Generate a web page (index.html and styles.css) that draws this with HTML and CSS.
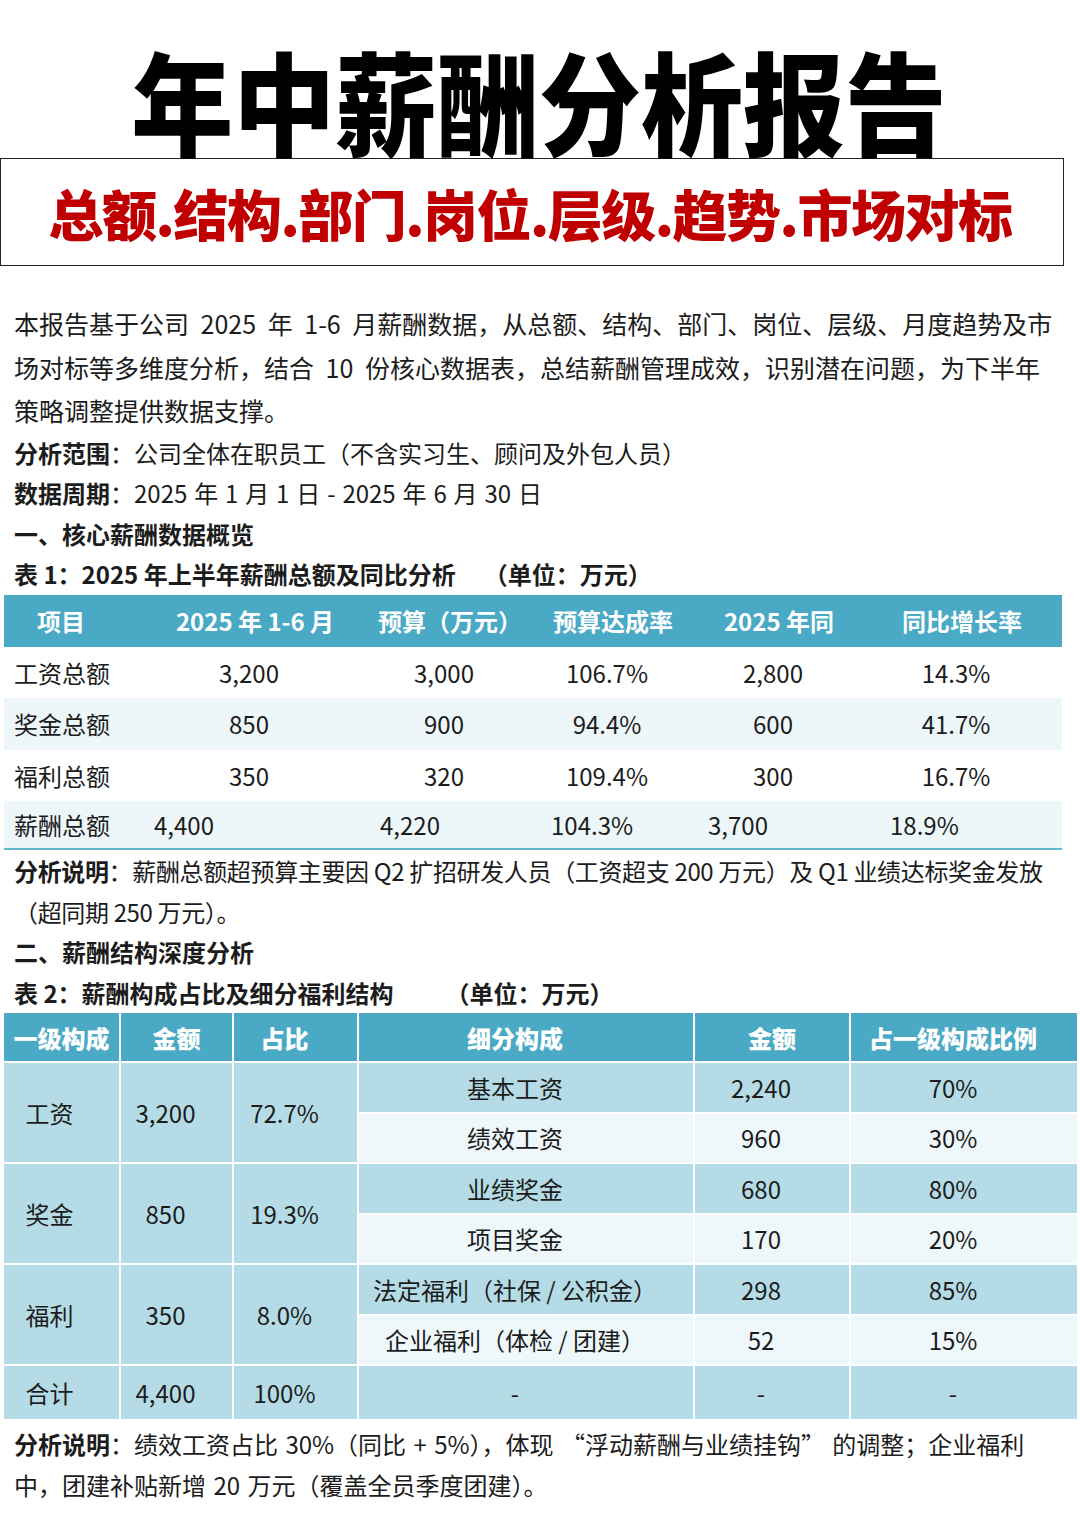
FILE: index.html
```html
<!DOCTYPE html>
<html lang="zh-CN">
<head>
<meta charset="utf-8">
<title>年中薪酬分析报告</title>
<link rel="stylesheet" href="styles.css">
</head>
<body>
<div class="page">
  <h1 class="title"><span class="title-text">年中薪酬分析报告</span></h1>
  <div class="subbox"><div class="subtitle">总额.结构.部门.岗位.层级.趋势.市场对标</div></div>

  <div class="content">
    <p class="intro">本报告基于公司 2025 年 1-6 月薪酬数据，从总额、结构、部门、岗位、层级、月度趋势及市场对标等多维度分析，结合 10 份核心数据表，总结薪酬管理成效，识别潜在问题，为下半年策略调整提供数据支撑。</p>
    <p class="line"><b>分析范围</b>：公司全体在职员工（不含实习生、顾问及外包人员）</p>
    <p class="line spaced"><b>数据周期</b>：2025 年 1 月 1 日 - 2025 年 6 月 30 日</p>
    <h2 class="section">一、核心薪酬数据概览</h2>
    <h3 class="caption">表 1：2025 年上半年薪酬总额及同比分析<span class="unit">（单位：万元）</span></h3>
  </div>

  <table class="t1">
    <colgroup>
      <col class="c1"><col class="c2"><col class="c3"><col class="c4"><col class="c5"><col class="c6">
    </colgroup>
    <thead>
      <tr><th class="name">项目</th><th>2025 年 1-6 月</th><th>预算（万元）</th><th>预算达成率</th><th>2025 年同</th><th>同比增长率</th></tr>
    </thead>
    <tbody>
      <tr><td class="name">工资总额</td><td>3,200</td><td>3,000</td><td>106.7%</td><td>2,800</td><td>14.3%</td></tr>
      <tr class="alt"><td class="name">奖金总额</td><td>850</td><td>900</td><td>94.4%</td><td>600</td><td>41.7%</td></tr>
      <tr><td class="name">福利总额</td><td>350</td><td>320</td><td>109.4%</td><td>300</td><td>16.7%</td></tr>
      <tr class="alt last"><td class="name">薪酬总额</td><td>4,400</td><td>4,220</td><td>104.3%</td><td>3,700</td><td>18.9%</td></tr>
    </tbody>
  </table>

  <div class="content">
    <p class="note tight"><b>分析说明</b>：薪酬总额超预算主要因 Q2 扩招研发人员（工资超支 200 万元）及 Q1 业绩达标奖金发放（超同期 250 万元）。</p>
    <h2 class="section">二、薪酬结构深度分析</h2>
    <h3 class="caption">表 2：薪酬构成占比及细分福利结构<span class="unit2">（单位：万元）</span></h3>
  </div>

  <table class="t2">
    <colgroup>
      <col class="d1"><col class="d2"><col class="d3"><col class="d4"><col class="d5"><col class="d6">
    </colgroup>
    <thead>
      <tr><th>一级构成</th><th>金额</th><th class="sh">占比</th><th class="sh">细分构成</th><th>金额</th><th class="sh">占一级构成比例</th></tr>
    </thead>
    <tbody>
      <tr class="dark"><td rowspan="2" class="m first">工资</td><td rowspan="2" class="m">3,200</td><td rowspan="2" class="m">72.7%</td><td>基本工资</td><td>2,240</td><td>70%</td></tr>
      <tr class="light"><td>绩效工资</td><td>960</td><td>30%</td></tr>
      <tr class="dark"><td rowspan="2" class="m first">奖金</td><td rowspan="2" class="m">850</td><td rowspan="2" class="m">19.3%</td><td>业绩奖金</td><td>680</td><td>80%</td></tr>
      <tr class="light"><td>项目奖金</td><td>170</td><td>20%</td></tr>
      <tr class="dark"><td rowspan="2" class="m first">福利</td><td rowspan="2" class="m">350</td><td rowspan="2" class="m">8.0%</td><td>法定福利（社保 / 公积金）</td><td>298</td><td>85%</td></tr>
      <tr class="light"><td>企业福利（体检 / 团建）</td><td>52</td><td>15%</td></tr>
      <tr class="dark total"><td class="m first">合计</td><td class="m">4,400</td><td class="m">100%</td><td>-</td><td>-</td><td>-</td></tr>
    </tbody>
  </table>

  <div class="content">
    <p class="note wide"><b>分析说明</b>：绩效工资占比 30%（同比 + 5%），体现 “浮动薪酬与业绩挂钩” 的调整；企业福利中，团建补贴新增 20 万元（覆盖全员季度团建）。</p>
  </div>
</div>
</body>
</html>
```

FILE: styles.css
```css
* { box-sizing: border-box; }
html, body { margin: 0; padding: 0; background: #ffffff; }
body {
  font-family: "Noto Sans CJK SC", "Noto Sans", sans-serif;
  color: #1c1c1c;
}
.page { width: 1080px; }

.title {
  margin: 0;
  padding-top: 44px;
  height: 158px;
  font-size: 112px;
  line-height: 110px;
  font-weight: 900;
  color: #000;
  text-align: center;
  white-space: nowrap;
}
.title-text {
  display: inline-block;
  transform: scaleX(0.91);
  margin-left: -2px;
}

.subbox {
  width: 1064px;
  height: 108px;
  border: 1.5px solid #222;
  display: flex;
  align-items: center;
  justify-content: center;
}
.subtitle {
  color: #c00000;
  font-size: 55px;
  font-weight: 900;
  letter-spacing: -1.5px;
  line-height: 1;
  white-space: nowrap;
  margin-left: -4px;
}

.content { padding: 0 20px 0 14px; }
.intro {
  margin: 36px 0 0 0;
  font-size: 25px;
  line-height: 43.5px;
  word-spacing: 6px;
}
.line, .note {
  margin: 0;
  font-size: 24px;
  line-height: 40.5px;
}
.line.spaced { word-spacing: 1.5px; }
.note { line-height: 41px; }
.note.tight { letter-spacing: -0.35px; }
.note.wide { word-spacing: 2px; }
.line b, .note b { font-weight: 700; }
.section, .caption {
  margin: 0;
  font-size: 24px;
  line-height: 40.5px;
  font-weight: 700;
}
.unit { margin-left: 28px; }
.unit2 { margin-left: 52px; }

/* Table 1 */
.t1 {
  margin-left: 4px;
  width: 1058px;
  border-collapse: collapse;
  table-layout: fixed;
  font-size: 24px;
  border-bottom: 2px solid #63b7cf;
}
.t1 .c1 { width: 136px; }
.t1 .c2 { width: 230px; }
.t1 .c3 { width: 160px; }
.t1 .c4 { width: 166px; }
.t1 .c5 { width: 166px; }
.t1 .c6 { width: 200px; }
.t1 th {
  background: #4aa9c5;
  color: #fff;
  font-weight: 700;
  height: 52px;
  padding: 0;
  text-align: center;
}
.t1 th.name { padding-right: 22px; }
.t1 td {
  height: 51.5px;
  padding: 0 12px 0 0;
  text-align: center;
  font-weight: 400;
}
.t1 td.name { text-align: left; padding: 0 0 0 10px; }
.t1 tr.alt td { background: #edf6f9; }
.t1 tr.last td { text-align: left; padding: 0 0 0 14px; height: 48px; }
.t1 tr.last td.name { padding-left: 10px; }
.t1 tr.last td:nth-child(3) { padding-left: 10px; }
.t1 tr.last td:nth-child(4) { padding-left: 21px; }
.t1 tr.last td:nth-child(5) { padding-left: 12px; }
.t1 tr.last td:nth-child(6) { padding-left: 28px; }

/* Table 2 */
.t2 {
  margin-left: 4px;
  width: 1073px;
  border-collapse: collapse;
  table-layout: fixed;
  font-size: 24px;
}
.t2 .d1 { width: 116px; }
.t2 .d2 { width: 113px; }
.t2 .d3 { width: 125px; }
.t2 .d4 { width: 336px; }
.t2 .d5 { width: 156px; }
.t2 .d6 { width: 227px; }
.t2 th, .t2 td { border: 2px solid #ffffff; padding: 0; }
.t2 tr > :first-child { border-left: none; }
.t2 tr > :last-child { border-right: none; }
.t2 thead th { border-top: none; }
.t2 th {
  background: #4aa9c5;
  color: #fff;
  font-weight: 900;
  height: 49px;
  text-align: center;
}
.t2 th.sh { padding-right: 22px; }
.t2 td {
  height: 50.5px;
  text-align: center;
  padding-right: 22px;
}
.t2 td.m { background: #b5dce6; }
.t2 td.first { padding-right: 24px; }
.t2 tr.dark td { background: #b5dce6; }
.t2 tr.light td { background: #eef7fa; }
.t2 tr.total td { height: 55px; }

.t2 + .content .note { margin-top: 2px; }
```
